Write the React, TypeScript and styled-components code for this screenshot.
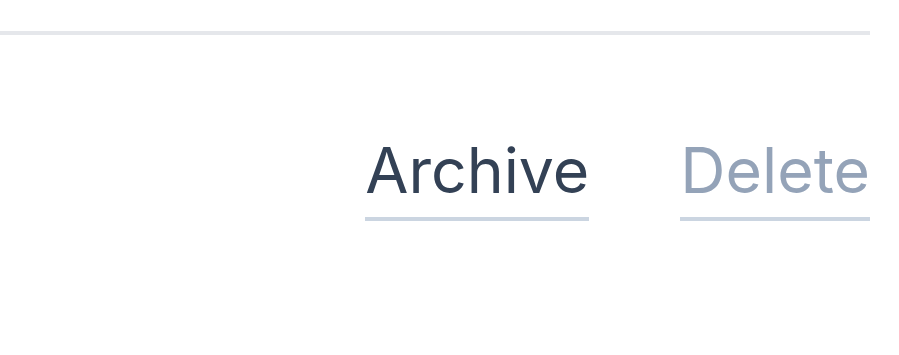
import React from 'react';
import styled, { createGlobalStyle } from 'styled-components';

const GlobalStyle = createGlobalStyle`
  html, body {
    margin: 0;
    padding: 0;
    background: #ffffff;
    font-family: Inter, "Noto Sans", sans-serif;
  }
`;

const Panel = styled.div`
  width: 870px;
  padding-top: 31px;
`;

const Divider = styled.hr`
  margin: 0;
  border: none;
  height: 4px;
  background: #e5e7eb;
`;

const TabBar = styled.nav`
  display: flex;
  justify-content: flex-end;
  gap: 91px;
  margin-top: 97px;
`;

const Tab = styled.button<{ $active?: boolean }>`
  appearance: none;
  background: none;
  border: none;
  border-bottom: 4px solid #cbd5e1;
  padding: 0 0 9px;
  margin: 0;
  font-family: Inter, "Noto Sans", sans-serif;
  font-size: 62.6px;
  font-weight: 400;
  line-height: normal;
  color: ${(p) => (p.$active ? '#334155' : '#94a3b8')};
  cursor: pointer;
`;

const tabs = [
  { id: 'archive', label: 'Archive' },
  { id: 'delete', label: 'Delete' }
];

function App() {
  const active = 'archive';

  return (
    <>
      <GlobalStyle />
      <Panel>
        <Divider />
        <TabBar>
          {tabs.map((tab) => (
            <Tab key={tab.id} $active={tab.id === active}>
              {tab.label}
            </Tab>
          ))}
        </TabBar>
      </Panel>
    </>
  );
}

export default App;
